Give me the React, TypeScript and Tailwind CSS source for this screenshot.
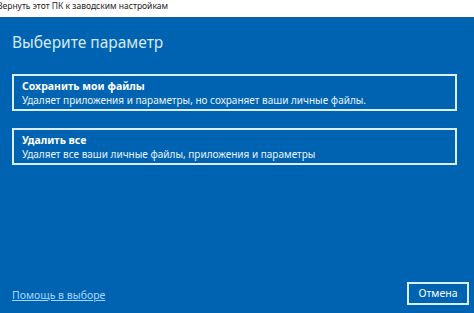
export default function App() {
  const options = [
    {
      title: 'Сохранить мои файлы',
      desc: 'Удаляет приложения и параметры, но сохраняет ваши личные файлы.',
    },
    {
      title: 'Удалить все',
      desc: 'Удаляет все ваши личные файлы, приложения и параметры',
    },
  ]

  return (
    <div className="w-[474px] h-[313px] flex flex-col overflow-hidden font-['Noto_Sans',sans-serif] bg-[#0063b1]">
      {/* Title bar */}
      <div className="h-[18px] bg-white border-b border-[#1c5a8c] flex items-start overflow-hidden">
        <p className="text-[8.5px] leading-[10px] text-[#222] ml-[-3px] mt-[1px] whitespace-nowrap">
          Вернуть этот ПК к заводским настройкам
        </p>
      </div>

      <div className="flex-1 flex flex-col bg-[#0063b1] pl-[12px]">
        <h1 className="text-[15.5px] leading-[20px] text-[#d4e9fa] mt-[14px]">Выберите параметр</h1>

        <div className="flex flex-col gap-[17px] mt-[22px] w-[445px]">
          {options.map(o => (
            <div key={o.title} className="h-[37px] border-2 border-[#dbeefc] px-[8px] pt-[3px]">
              <p className="text-[10.5px] leading-[14px] font-bold text-white">{o.title}</p>
              <p className="text-[10px] leading-[14px] text-[#e8f3fc]">{o.desc}</p>
            </div>
          ))}
        </div>

        {/* Footer */}
        <div className="mt-auto mb-[8px] flex items-center justify-between pr-[5px]">
          <a className="text-[10.5px] leading-[14px] text-[#a8d6fb] underline mt-[2px]">Помощь в выборе</a>
          <button className="w-[62px] h-[23px] border-2 border-[#dbeefc] text-[10.5px] text-white flex items-center justify-center">
            Отмена
          </button>
        </div>
      </div>
    </div>
  )
}
